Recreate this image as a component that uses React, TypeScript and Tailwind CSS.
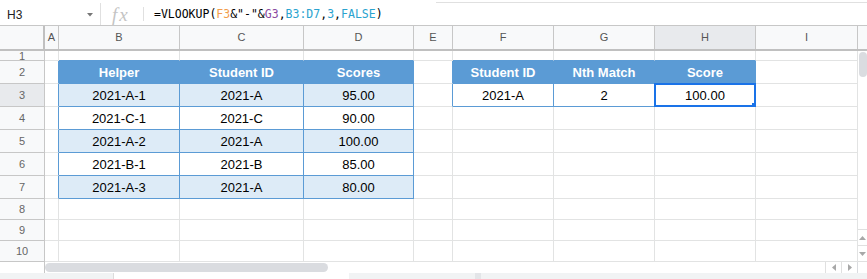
import React from 'react';

const COLS = [
  { k: 'A', w: 'w-[14px]' },
  { k: 'B', w: 'w-[121px]' },
  { k: 'C', w: 'w-[124px]' },
  { k: 'D', w: 'w-[110px]' },
  { k: 'E', w: 'w-[39px]' },
  { k: 'F', w: 'w-[101px]' },
  { k: 'G', w: 'w-[101px]' },
  { k: 'H', w: 'w-[101px]' },
  { k: 'I', w: 'w-[102px]' },
];

const ROWS = [
  { n: 1, h: 'h-[10px]' },
  { n: 2, h: 'h-[23px]' },
  { n: 3, h: 'h-[23px]' },
  { n: 4, h: 'h-[23px]' },
  { n: 5, h: 'h-[23px]' },
  { n: 6, h: 'h-[23px]' },
  { n: 7, h: 'h-[23px]' },
  { n: 8, h: 'h-[21px]' },
  { n: 9, h: 'h-[21px]' },
  { n: 10, h: 'h-[21px]' },
];

const DATA: Record<string, string> = {
  B2: 'Helper', C2: 'Student ID', D2: 'Scores',
  B3: '2021-A-1', C3: '2021-A', D3: '95.00',
  B4: '2021-C-1', C4: '2021-C', D4: '90.00',
  B5: '2021-A-2', C5: '2021-A', D5: '100.00',
  B6: '2021-B-1', C6: '2021-B', D6: '85.00',
  B7: '2021-A-3', C7: '2021-A', D7: '80.00',
  F2: 'Student ID', G2: 'Nth Match', H2: 'Score',
  F3: '2021-A', G3: '2', H3: '100.00',
};

const T1 = ['B', 'C', 'D'];
const T2 = ['F', 'G', 'H'];

function inTable(c: string, r: number) {
  return (T1.includes(c) && r >= 2 && r <= 7) || (T2.includes(c) && r >= 2 && r <= 3);
}

function Cell({ c, w, r }: { c: string; w: string; r: number }) {
  const t = inTable(c, r);
  const rightBlue = t || (c === 'A' && r >= 2 && r <= 7) || (c === 'E' && r >= 2 && r <= 3);
  const bottomBlue = t || (r === 1 && (T1.includes(c) || T2.includes(c)));
  const rb = rightBlue ? 'border-r-[#5b9bd5]' : 'border-r-[#e2e3e3]';
  const bb = bottomBlue ? 'border-b-[#5b9bd5]' : 'border-b-[#e2e3e3]';
  const header = t && r === 2;
  const band = T1.includes(c) && (r === 3 || r === 5 || r === 7);
  const bg = header ? 'bg-[#5b9bd5]' : band ? 'bg-[#ddebf7]' : 'bg-white';
  const text = DATA[`${c}${r}`];
  const selected = c === 'H' && r === 3;
  return (
    <div className={`${w} h-full shrink-0 border-r border-b ${rb} ${bb} ${bg} relative flex items-center justify-center`}>
      {text && (
        <span
          className={header ? 'text-[13px] leading-none font-bold text-white' : 'text-[13px] leading-none text-black'}
          style={{ fontFamily: '"Liberation Sans", Arial, sans-serif' }}
        >
          {text}
        </span>
      )}
      {selected && (
        <>
          <div className="absolute -left-[1px] -top-[1px] -right-[1px] -bottom-[1px] border-2 border-[#1a73e8] pointer-events-none" />
          <div className="absolute -right-[3px] -bottom-[3px] w-[6px] h-[6px] bg-[#1a73e8]" />
        </>
      )}
    </div>
  );
}

function Tri({ dir }: { dir: 'up' | 'down' | 'left' | 'right' }) {
  const pts =
    dir === 'up' ? '0,4 3.5,0 7,4' : dir === 'down' ? '0,0 7,0 3.5,4' : dir === 'left' ? '4,0 4,7 0,3.5' : '0,0 0,7 4,3.5';
  const w = dir === 'up' || dir === 'down' ? 7 : 4;
  const h = dir === 'up' || dir === 'down' ? 4 : 7;
  return (
    <svg width={w} height={h} viewBox={`0 0 ${w} ${h}`}>
      <polygon points={pts} fill="#a8a8a8" />
    </svg>
  );
}

export default function App() {
  const sans = { fontFamily: '"Liberation Sans", Arial, sans-serif' };
  return (
    <div className="w-[867px] h-[279px] overflow-hidden bg-white flex flex-col" style={sans}>
      {/* Formula bar */}
      <div className="h-[26px] shrink-0 flex flex-col border-b border-b-[#c7c7c7]">
        <div className="h-[3px] flex">
          <div className="w-[436px]" />
          <div className="flex-1 border-b border-b-[#e0e0e0]" />
        </div>
        <div className="h-[22px] flex items-center">
          <div className="w-[100px] h-full flex items-center">
            <span className="pl-[7px] pt-[2px] text-[12px] text-[#222]">H3</span>
            <div className="ml-auto mr-[7px] pt-[2px] flex items-center">
              <svg width="6" height="4" viewBox="0 0 6 4">
                <polygon points="0,0 6,0 3,3.5" fill="#777" />
              </svg>
            </div>
          </div>
          <div className="w-px self-stretch bg-[#e0e0e0]" />
          <div className="w-[42px] h-full flex items-center pl-[11px]">
            <span
              className="italic text-[19px] leading-none tracking-[2px] text-[#c4c4c4]"
              style={{ fontFamily: '"Liberation Serif", "Times New Roman", serif' }}
            >
              fx
            </span>
          </div>
          <div className="w-px h-[14px] bg-[#e0e0e0]" />
          <div
            className="pl-[10px] pt-[2px] text-[11.5px] leading-none text-black whitespace-pre"
            style={{ fontFamily: '"DejaVu Sans Mono", "Liberation Mono", monospace' }}
          >
            =VLOOKUP(<span className="text-[#f29d4b]">F3</span>&amp;"-"&amp;
            <span className="text-[#8a4aa0]">G3</span>,<span className="text-[#2aa3cf]">B3:D7</span>,
            <span className="text-[#2aa3cf]">3</span>,<span className="text-[#2aa3cf]">FALSE</span>)
          </div>
        </div>
      </div>

      {/* Grid body */}
      <div className="h-[236px] shrink-0 flex">
        <div className="w-[858px] flex flex-col">
          {/* Column headers */}
          <div className="h-[25px] shrink-0 flex border-b-2 border-b-[#c0c0c0] bg-[#f8f9fa]">
            <div className="w-[45px] shrink-0 border-r-2 border-r-[#c0c0c0]" />
            {COLS.map((c) => (
              <div
                key={c.k}
                className={`${c.w} shrink-0 h-full border-r border-r-[#c7c7c7] flex items-center justify-center text-[11px] text-[#555] ${
                  c.k === 'H' ? 'bg-[#e8eaed]' : 'bg-[#f8f9fa]'
                }`}
              >
                {c.k}
              </div>
            ))}
          </div>
          {/* Rows */}
          {ROWS.map((row) => (
            <div key={row.n} className={`${row.h} shrink-0 flex`}>
              <div
                className={`w-[45px] shrink-0 h-full border-r border-b border-r-[#c7c7c7] border-b-[#c7c7c7] flex justify-center overflow-hidden text-[11px] text-[#666] ${
                  row.n === 1 ? 'items-end' : 'items-center'
                } ${row.n === 3 ? 'bg-[#e8eaed]' : 'bg-[#f8f9fa]'}`}
              >
                {row.n === 1 ? (
                  <span className="leading-[14px] -mb-[3px]">1</span>
                ) : (
                  <span className="leading-none">{row.n}</span>
                )}
              </div>
              {COLS.map((c) => (
                <Cell key={c.k} c={c.k} w={c.w} r={row.n} />
              ))}
            </div>
          ))}
        </div>
        {/* Vertical scrollbar */}
        <div className="w-[9px] flex flex-col">
          <div className="h-[25px] shrink-0 bg-[#f8f9fa] border-b-2 border-b-[#c0c0c0]" />
          <div className="h-[25px] shrink-0 mt-[1px] ml-[1px] w-[8px] rounded-[4px] bg-[#dadce0]" />
          <div className="flex-1" />
          <div className="h-[16px] shrink-0 border-t border-t-[#e0e0e0] flex items-center justify-center">
            <Tri dir="up" />
          </div>
          <div className="h-[17px] shrink-0 border-t border-b border-t-[#e0e0e0] border-b-[#e0e0e0] flex items-center justify-center">
            <Tri dir="down" />
          </div>
        </div>
      </div>

      {/* Horizontal scrollbar */}
      <div className="h-[11px] shrink-0 flex">
        <div className="w-[45px] shrink-0 border-r border-r-[#c7c7c7]" />
        <div className="w-[780px] shrink-0">
          <div className="mt-[1px] w-[283px] h-[9px] rounded-full bg-[#dadce0]" />
        </div>
        <div className="w-[16px] shrink-0 border-l border-l-[#e0e0e0] flex items-center justify-center">
          <Tri dir="left" />
        </div>
        <div className="w-[16px] shrink-0 border-l border-l-[#e0e0e0] flex items-center justify-center">
          <Tri dir="right" />
        </div>
        <div className="w-[10px] shrink-0 border-l border-l-[#dadce0]" />
      </div>

      {/* Sheet tab strip */}
      <div className="h-[6px] shrink-0 flex bg-[#f1f3f4]">
        <div className="w-[114px] shrink-0 border-r border-r-[#dcdcdc]" />
        <div className="w-[235px] shrink-0 bg-white" />
        <div className="w-[126px] shrink-0" />
        <div className="w-[6px] shrink-0 bg-[#e3e5e8]" />
      </div>
    </div>
  );
}
